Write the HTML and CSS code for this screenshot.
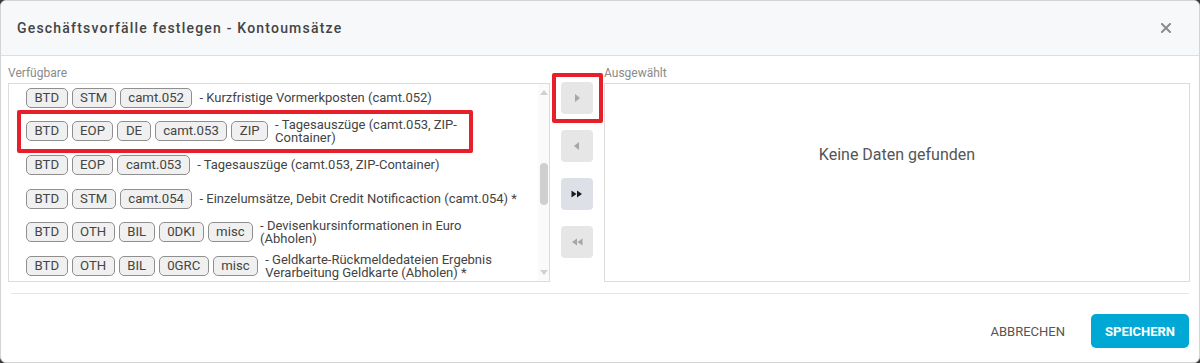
FILE: index.html
```html
<!DOCTYPE html>
<html lang="de">
<head>
  <meta charset="UTF-8">
  <meta name="viewport" content="width=device-width, initial-scale=1.0">
  <title>Geschäftsvorfälle festlegen</title>
  <link rel="stylesheet" href="styles.css">
</head>
<body>

  <div class="dialog">
    <div class="dialog-header">
      <h2 class="title">Geschäftsvorfälle festlegen - Kontoumsätze</h2>
      <button class="close" aria-label="Schließen">
        <svg width="10" height="10" viewBox="0 0 10 10">
          <path d="M1 1 L9 9 M9 1 L1 9" stroke="#8c8c8c" stroke-width="2" stroke-linecap="square"/>
        </svg>
      </button>
    </div>

    <div class="dialog-body">
      <div class="pane pane-left">
        <div class="pane-label">Verfügbare</div>
        <div class="list-box">
          <div class="rows">
            <div class="row">
              <span class="tag">BTD</span><span class="tag">STM</span><span class="tag">camt.052</span>
              <span class="desc">- Kurzfristige Vormerkposten (camt.052)</span>
            </div>
            <div class="row">
              <span class="tag">BTD</span><span class="tag">EOP</span><span class="tag">DE</span><span class="tag">camt.053</span><span class="tag">ZIP</span>
              <span class="desc">- Tagesauszüge (camt.053, ZIP-<br>Container)</span>
              <span class="mark mark-row"></span>
            </div>
            <div class="row">
              <span class="tag">BTD</span><span class="tag">EOP</span><span class="tag">camt.053</span>
              <span class="desc">- Tagesauszüge (camt.053, ZIP-Container)</span>
            </div>
            <div class="row">
              <span class="tag">BTD</span><span class="tag">STM</span><span class="tag">camt.054</span>
              <span class="desc">- Einzelumsätze, Debit Credit Notificaction (camt.054) *</span>
            </div>
            <div class="row">
              <span class="tag">BTD</span><span class="tag">OTH</span><span class="tag">BIL</span><span class="tag">0DKI</span><span class="tag">misc</span>
              <span class="desc">- Devisenkursinformationen in Euro<br>(Abholen)</span>
            </div>
            <div class="row">
              <span class="tag">BTD</span><span class="tag">OTH</span><span class="tag">BIL</span><span class="tag">0GRC</span><span class="tag">misc</span>
              <span class="desc">- Geldkarte-Rückmeldedateien Ergebnis Verarbeitung Geldkarte (Abholen) *</span>
            </div>
          </div>
          <div class="scrollbar">
            <span class="arrow arrow-up"></span>
            <div class="track"><span class="thumb"></span></div>
            <span class="arrow arrow-down"></span>
          </div>
        </div>
      </div>

      <div class="transfer">
        <div class="move-wrap">
          <button class="move" disabled>
            <svg width="10" height="10" viewBox="0 0 10 10"><path d="M3 1 L8 5 L3 9 Z" fill="#a6a6a6"/></svg>
          </button>
          <span class="mark mark-button"></span>
        </div>
        <button class="move" disabled>
          <svg width="10" height="10" viewBox="0 0 10 10"><path d="M7 1 L2 5 L7 9 Z" fill="#a6a6a6"/></svg>
        </button>
        <button class="move move-active">
          <svg width="12" height="10" viewBox="0 0 12 10"><path d="M0.5 1.5 L5.5 5 L0.5 8.5 Z M6 1.5 L11 5 L6 8.5 Z" fill="#1a1a1a"/></svg>
        </button>
        <button class="move" disabled>
          <svg width="12" height="10" viewBox="0 0 12 10"><path d="M6 1.5 L1 5 L6 8.5 Z M11.5 1.5 L6.5 5 L11.5 8.5 Z" fill="#a6a6a6"/></svg>
        </button>
      </div>

      <div class="pane pane-right">
        <div class="pane-label">Ausgewählt</div>
        <div class="list-box selected-box">
          <p class="empty">Keine Daten gefunden</p>
        </div>
      </div>
    </div>

    <div class="dialog-footer">
      <button class="btn-text">ABBRECHEN</button>
      <button class="btn-primary">SPEICHERN</button>
    </div>
  </div>

</body>
</html>
```

FILE: styles.css
```css
body {
  margin: 0;
  background: #3b3b3b;
  font-family: Roboto, "Liberation Sans", Arial, sans-serif;
  color: #444;
}
button {
  font-family: inherit;
  border: none;
  background: none;
  padding: 0;
  cursor: pointer;
}

.dialog {
  height: 363px;
  box-sizing: border-box;
  background: #fff;
  border: 1px solid #d4d4d4;
  border-radius: 6px;
  overflow: hidden;
  display: flex;
  flex-direction: column;
}

.dialog-header {
  height: 54px;
  flex-shrink: 0;
  background: #f7f8fa;
  border-bottom: 1px solid #dedede;
  display: flex;
  align-items: center;
  justify-content: space-between;
  padding: 0 28px 0 16px;
}
.title {
  margin: 0;
  font-size: 14px;
  font-weight: 500;
  letter-spacing: 1.2px;
  color: #444;
}
.close {
  width: 10px;
  height: 10px;
  display: flex;
}

.dialog-body {
  display: flex;
  padding: 10px 9px 0 7px;
}
.pane-left {
  width: 542px;
}
.pane-right {
  flex: 1;
}
.pane-label {
  font-size: 12px;
  line-height: 14px;
  color: #8a8a8a;
  margin-bottom: 3px;
}
.list-box {
  height: 199px;
  box-sizing: border-box;
  border: 1px solid #dcdcdc;
  display: flex;
}

.rows {
  flex: 1;
  overflow: hidden;
}
.row {
  position: relative;
  height: 33.6px;
  display: flex;
  align-items: center;
  gap: 4px;
  padding: 0 12px 0 17px;
}
.row:first-child {
  margin-top: -3px;
}
.tag {
  flex-shrink: 0;
  height: 20px;
  box-sizing: border-box;
  padding: 0 7.5px;
  border: 1px solid #8f8f8f;
  border-radius: 5px;
  background: #f0f0f0;
  font-size: 13.2px;
  line-height: 18px;
  color: #444;
}
.desc {
  margin-left: 3px;
  font-size: 13px;
  line-height: 13px;
  color: #444;
}

.mark {
  position: absolute;
  box-sizing: border-box;
  border: 4px solid #e61f2b;
  border-radius: 2px;
  pointer-events: none;
}
.mark-row {
  left: 8px;
  top: -5px;
  width: 456px;
  height: 43px;
}

.scrollbar {
  width: 11px;
  background: #fafafa;
  display: flex;
  flex-direction: column;
  align-items: center;
}
.arrow {
  width: 0;
  height: 0;
  border-left: 4px solid transparent;
  border-right: 4px solid transparent;
}
.arrow-up {
  margin-top: 6px;
  border-bottom: 5px solid #d0d0d0;
}
.arrow-down {
  margin-bottom: 6px;
  border-top: 5px solid #d0d0d0;
}
.track {
  flex: 1;
}
.thumb {
  display: block;
  width: 8px;
  height: 42px;
  margin-top: 68px;
  border-radius: 4px;
  background: #cfcfcf;
}

.transfer {
  width: 54px;
  flex-shrink: 0;
  display: flex;
  flex-direction: column;
  align-items: center;
  gap: 16px;
  padding-top: 16px;
}
.move-wrap {
  position: relative;
  display: flex;
}
.move {
  width: 32px;
  height: 32px;
  border-radius: 4px;
  background: #e6e6e6;
  display: flex;
  align-items: center;
  justify-content: center;
}
.move-active {
  background: #dde0e6;
}
.mark-button {
  inset: -9px -10px -9px -9px;
}

.selected-box {
  justify-content: center;
}
.empty {
  margin: 0;
  padding-top: 61px;
  font-size: 16px;
  color: #555;
}

.dialog-footer {
  margin: 11px 10px 0;
  border-top: 1px solid #e6e6e6;
  display: flex;
  justify-content: flex-end;
  align-items: center;
  gap: 26px;
  padding-top: 20px;
}
.btn-text {
  font-size: 13px;
  color: #555;
}
.btn-primary {
  height: 34px;
  padding: 0 14px;
  border-radius: 5px;
  background: #00a9d5;
  color: #fff;
  font-size: 13px;
  font-weight: 700;
}
```
